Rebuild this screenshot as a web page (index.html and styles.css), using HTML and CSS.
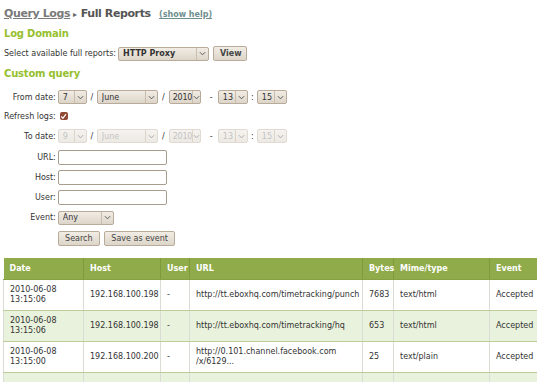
FILE: index.html
```html
<!DOCTYPE html>
<html lang="en">
<head>
    <meta charset="UTF-8">
    <title>Query Logs - Full Reports</title>
    <link rel="stylesheet" href="styles.css">
</head>
<body>
    <h1 class="title">
        <a href="#" class="crumb">Query Logs</a><span class="sep">&#9656;</span>Full Reports
        <a href="#" class="help">(show help)</a>
    </h1>

    <h3>Log Domain</h3>
    <div class="domain-row">
        <span>Select available full reports:</span>
        <span class="sel sel-domain">
            <select><option>HTTP Proxy</option></select>
            <span class="arrow"><svg viewBox="0 0 8 5" width="7" height="5"><path d="M1 1 L4 4 L7 1" fill="none" stroke="#555" stroke-width="1.1"/></svg></span>
        </span>
        <button class="btn">View</button>
    </div>

    <h3 class="custom">Custom query</h3>
    <table class="query">
        <tr>
            <td class="lbl">From date:</td>
            <td>
                <div class="date">
                    <span class="sel sel-day"><select><option>7</option></select><span class="arrow"><svg viewBox="0 0 8 5" width="7" height="5"><path d="M1 1 L4 4 L7 1" fill="none" stroke="#555" stroke-width="1.1"/></svg></span></span>
                    <span class="dsep">/</span>
                    <span class="sel sel-month"><select><option>June</option></select><span class="arrow"><svg viewBox="0 0 8 5" width="7" height="5"><path d="M1 1 L4 4 L7 1" fill="none" stroke="#555" stroke-width="1.1"/></svg></span></span>
                    <span class="dsep d2">/</span>
                    <span class="sel sel-year"><select><option>2010</option></select><span class="arrow"><svg viewBox="0 0 8 5" width="7" height="5"><path d="M1 1 L4 4 L7 1" fill="none" stroke="#555" stroke-width="1.1"/></svg></span></span>
                    <span class="dsep wide">-</span>
                    <span class="sel sel-hour"><select><option>13</option></select><span class="arrow"><svg viewBox="0 0 8 5" width="7" height="5"><path d="M1 1 L4 4 L7 1" fill="none" stroke="#555" stroke-width="1.1"/></svg></span></span>
                    <span class="dsep d3">:</span>
                    <span class="sel sel-hour"><select><option>15</option></select><span class="arrow"><svg viewBox="0 0 8 5" width="7" height="5"><path d="M1 1 L4 4 L7 1" fill="none" stroke="#555" stroke-width="1.1"/></svg></span></span>
                </div>
            </td>
        </tr>
        <tr class="short">
            <td class="lbl">Refresh logs:</td>
            <td><span class="check"><svg viewBox="0 0 8 8" width="7" height="7"><path d="M1.5 4 L3.3 6 L6.8 1.2" fill="none" stroke="#fff" stroke-width="1.3"/></svg></span></td>
        </tr>
        <tr class="tall">
            <td class="lbl">To date:</td>
            <td>
                <div class="date disabled">
                    <span class="sel sel-day"><select disabled><option>9</option></select><span class="arrow"><svg viewBox="0 0 8 5" width="7" height="5"><path d="M1 1 L4 4 L7 1" fill="none" stroke="#aaa" stroke-width="1.1"/></svg></span></span>
                    <span class="dsep">/</span>
                    <span class="sel sel-month"><select disabled><option>June</option></select><span class="arrow"><svg viewBox="0 0 8 5" width="7" height="5"><path d="M1 1 L4 4 L7 1" fill="none" stroke="#aaa" stroke-width="1.1"/></svg></span></span>
                    <span class="dsep d2">/</span>
                    <span class="sel sel-year"><select disabled><option>2010</option></select><span class="arrow"><svg viewBox="0 0 8 5" width="7" height="5"><path d="M1 1 L4 4 L7 1" fill="none" stroke="#aaa" stroke-width="1.1"/></svg></span></span>
                    <span class="dsep wide">-</span>
                    <span class="sel sel-hour"><select disabled><option>13</option></select><span class="arrow"><svg viewBox="0 0 8 5" width="7" height="5"><path d="M1 1 L4 4 L7 1" fill="none" stroke="#aaa" stroke-width="1.1"/></svg></span></span>
                    <span class="dsep d3">:</span>
                    <span class="sel sel-hour"><select disabled><option>15</option></select><span class="arrow"><svg viewBox="0 0 8 5" width="7" height="5"><path d="M1 1 L4 4 L7 1" fill="none" stroke="#aaa" stroke-width="1.1"/></svg></span></span>
                </div>
            </td>
        </tr>
        <tr>
            <td class="lbl">URL:</td>
            <td><input type="text" class="txt"></td>
        </tr>
        <tr>
            <td class="lbl">Host:</td>
            <td><input type="text" class="txt"></td>
        </tr>
        <tr>
            <td class="lbl">User:</td>
            <td><input type="text" class="txt"></td>
        </tr>
        <tr class="event">
            <td class="lbl">Event:</td>
            <td><span class="sel sel-event"><select><option>Any</option></select><span class="arrow"><svg viewBox="0 0 8 5" width="7" height="5"><path d="M1 1 L4 4 L7 1" fill="none" stroke="#555" stroke-width="1.1"/></svg></span></span></td>
        </tr>
        <tr>
            <td></td>
            <td class="actions">
                <button class="btn">Search</button>
                <button class="btn">Save as event</button>
            </td>
        </tr>
    </table>

    <table class="data">
        <colgroup>
            <col style="width: 80px">
            <col style="width: 77px">
            <col style="width: 29px">
            <col style="width: 173px">
            <col style="width: 31px">
            <col style="width: 96px">
            <col>
        </colgroup>
        <thead>
            <tr>
                <th>Date</th>
                <th>Host</th>
                <th>User</th>
                <th>URL</th>
                <th>Bytes</th>
                <th>Mime/type</th>
                <th>Event</th>
            </tr>
        </thead>
        <tbody>
            <tr>
                <td>2010-06-08<br>13:15:06</td>
                <td>192.168.100.198</td>
                <td>-</td>
                <td>http://tt.eboxhq.com/timetracking/punch</td>
                <td>7683</td>
                <td>text/html</td>
                <td>Accepted</td>
            </tr>
            <tr class="odd">
                <td>2010-06-08<br>13:15:06</td>
                <td>192.168.100.198</td>
                <td>-</td>
                <td>http://tt.eboxhq.com/timetracking/hq</td>
                <td>653</td>
                <td>text/html</td>
                <td>Accepted</td>
            </tr>
            <tr>
                <td>2010-06-08<br>13:15:00</td>
                <td>192.168.100.200</td>
                <td>-</td>
                <td>http://0.101.channel.facebook.com<br>/x/6129...</td>
                <td>25</td>
                <td>text/plain</td>
                <td>Accepted</td>
            </tr>
            <tr class="odd">
                <td></td>
                <td></td>
                <td></td>
                <td></td>
                <td></td>
                <td></td>
                <td></td>
            </tr>
        </tbody>
    </table>
</body>
</html>
```

FILE: styles.css
```css
body {
    font-family: 'DejaVu Sans', Verdana, sans-serif;
    font-size: 8px;
    color: #333;
    margin: 0;
    padding: 5px 3px 3px;
    background: white;
}

.title {
    font-size: 11px;
    font-weight: bold;
    color: #555;
    margin: 0 0 0 1px;
    line-height: 17px;
    letter-spacing: -0.4px;
}

.crumb {
    color: #7a7a7a;
}

.sep {
    font-size: 8px;
    color: #666;
    margin: 0 4px 0 3px;
}

.help {
    font-size: 8px;
    color: #6f8f8f;
    margin-left: 5px;
    letter-spacing: 0;
}

h3 {
    font-size: 10px;
    color: #96bf2e;
    margin: 4px 0 5px 1px;
    line-height: 14px;
    letter-spacing: -0.2px;
}

h3.custom {
    margin-bottom: 6px;
}

.domain-row {
    display: flex;
    align-items: center;
    gap: 2px;
    margin-left: 1px;
    height: 15px;
    margin-bottom: 6px;
}

.sel {
    position: relative;
    display: inline-block;
    height: 14px;
}

.sel select {
    appearance: none;
    -webkit-appearance: none;
    font-family: inherit;
    font-size: 8px;
    color: #333;
    height: 14px;
    width: 100%;
    box-sizing: border-box;
    border: 1px solid #b9ab9a;
    border-radius: 2px;
    background: linear-gradient(#f1ece4, #ddd5c9);
    padding: 0 0 0 4px;
    margin: 0;
}

.sel .arrow {
    position: absolute;
    right: 1px;
    top: 1px;
    bottom: 1px;
    width: 11px;
    border-left: 1px solid #c9bdae;
    display: flex;
    align-items: center;
    justify-content: center;
}

.sel-domain { width: 91px; }
.sel-domain select { font-weight: bold; }
.sel-day { width: 29px; }
.sel-month { width: 61px; }
.sel-year { width: 32px; }
.sel-year select {
    padding-left: 3px;
    padding-right: 0;
    letter-spacing: -0.3px;
}
.sel-year .arrow { width: 7px; }
.sel-hour { width: 30px; }
.sel-event { width: 56px; }

.btn {
    font-family: inherit;
    font-size: 8px;
    font-weight: bold;
    color: #444;
    height: 15px;
    padding: 0 6px;
    border: 1px solid #b9ab9a;
    border-radius: 2px;
    background: linear-gradient(#f1ece4, #ddd5c9);
}

.domain-row .btn {
    width: 34px;
    margin-left: 2px;
}

.query {
    border-collapse: collapse;
    margin-left: 1px;
}

.query td {
    padding: 0;
    height: 20px;
    vertical-align: middle;
}

.query tr.short td {
    height: 18px;
}

.query tr.tall td {
    height: 22px;
}

.query tr.event td {
    height: 21px;
}

.query .lbl {
    text-align: right;
    padding-right: 2px;
    white-space: nowrap;
}

.date {
    display: flex;
    align-items: center;
}

.dsep {
    width: 10px;
    text-align: center;
}

.dsep.d2 {
    width: 11px;
}

.dsep.d3 {
    width: 9px;
}

.dsep.wide {
    width: 17px;
    text-align: left;
    padding-left: 9px;
    box-sizing: border-box;
}

.date.disabled select {
    color: #aaa;
    background: linear-gradient(#f1eee9, #e6e0d8);
    border-color: #d4cbc0;
}

.date.disabled .arrow {
    border-left-color: #ddd4c8;
}

.check {
    display: inline-flex;
    align-items: center;
    justify-content: center;
    width: 8px;
    height: 8px;
    border-radius: 2px;
    background: #8e4a35;
    margin-left: 2px;
    vertical-align: middle;
}

.txt {
    width: 109px;
    height: 15px;
    box-sizing: border-box;
    border: 1px solid #a89c8e;
    border-radius: 2px;
    padding: 0 3px;
    margin: 0;
    font-family: inherit;
    font-size: 8px;
}

.actions .btn {
    font-weight: normal;
    height: 15px;
    margin-right: 2px;
}

.actions .btn:first-child {
    width: 42px;
}

.data {
    width: 534px;
    margin-top: 10px;
    border-collapse: collapse;
    table-layout: fixed;
}

.data th {
    background: #90ab4a;
    color: white;
    text-align: left;
    font-weight: bold;
    height: 21px;
    padding: 0 6px;
    border-left: 1px solid #7f9a3c;
    border-bottom: 1px solid #86a043;
}

.data th:first-child {
    border-left: none;
}

.data td {
    height: 30px;
    padding: 0 6px;
    line-height: 10px;
    vertical-align: middle;
    border-left: 1px solid #dcdcd6;
    border-bottom: 1px solid #bccc99;
    white-space: nowrap;
    overflow: hidden;
}

.data tr.odd td {
    background: #e9f2dc;
}
```
